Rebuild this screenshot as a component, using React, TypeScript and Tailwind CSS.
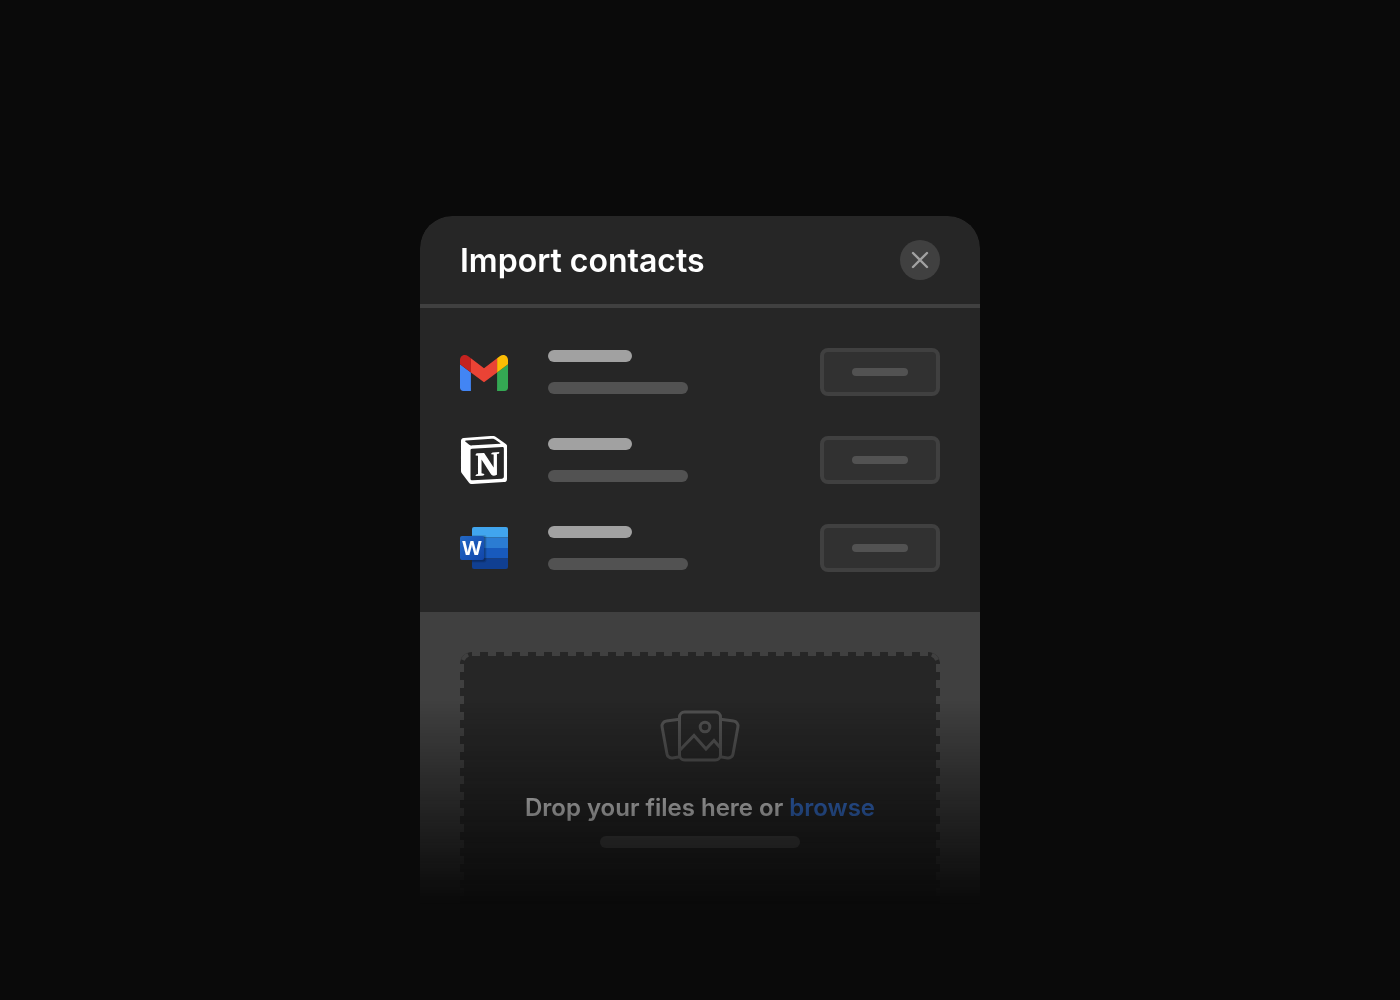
import { SiNotion } from "react-icons/si";

function GmailLogo() {
  return (
    <svg viewBox="52 29 88 88" className="size-12" aria-hidden="true">
      <path fill="#4285f4" d="M58 108h14V74L52 59v43c0 3.32 2.69 6 6 6" />
      <path fill="#34a853" d="M120 108h14c3.32 0 6-2.69 6-6V59l-20 15" />
      <path fill="#fbbc04" d="M120 48v26l20-15v-8c0-7.42-8.47-11.65-14.4-7.2" />
      <path fill="#ea4335" d="M72 74V48l24 18 24-18v26L96 92" />
      <path fill="#c5221f" d="M52 51v8l20 15V48l-5.6-4.2c-5.94-4.45-14.4-.22-14.4 7.2" />
    </svg>
  );
}

function WordLogo() {
  return (
    <svg viewBox="0 0 48 42" className="h-[42px] w-12" aria-hidden="true">
      <defs>
        <clipPath id="word-pages">
          <rect x="12" y="0" width="36" height="42" rx="2" />
        </clipPath>
        <linearGradient id="word-tile" x1="0" y1="0" x2="1" y2="1">
          <stop offset="0" stopColor="#2368c4" />
          <stop offset="1" stopColor="#1146ab" />
        </linearGradient>
      </defs>
      <g clipPath="url(#word-pages)">
        <path fill="#41a5ee" d="M12 0h36v10.5H12z" />
        <path fill="#2b7cd3" d="M12 10.5h36V21H12z" />
        <path fill="#185abd" d="M12 21h36v10.5H12z" />
        <path fill="#103f91" d="M12 31.5h36V42H12z" />
        <path fill="#000" opacity=".12" d="M12 8h12.5a2 2 0 0 1 2 2v23.500a2 2 0 0 1-2 2H12z" />
        <path fill="#000" opacity=".2" d="M12 9h11.500a2 2 0 0 1 2 2v21.500a2 2 0 0 1-2 2H12z" />
      </g>
      <rect x="0" y="9" width="24" height="24" rx="2" fill="url(#word-tile)" />
      <text x="12" y="28" textAnchor="middle" fill="#fff" fontFamily="'Open Sans', sans-serif" fontSize="20" fontWeight="700">
        W
      </text>
    </svg>
  );
}

function PhotosIcon() {
  return (
    <svg
      viewBox="0 0 80 52"
      className="h-[52px] w-20 text-neutral-600"
      fill="none"
      stroke="currentColor"
      strokeWidth="3"
      strokeLinejoin="round"
      aria-hidden="true"
    >
      <rect x="19.500" y="2" width="41" height="48" rx="5" />
      <path d="M19.500 9.200 6.400 11.100a4.800 4.800 0 0 0-4.300 5.800l4.900 27a4.800 4.800 0 0 0 5.600 4L20 46.800" />
      <path d="M60.500 9.200 73.600 11.100a4.800 4.800 0 0 1 4.300 5.800l-4.900 27a4.800 4.800 0 0 1-5.600 4L60 46.800" />
      <circle cx="45" cy="17" r="4.800" />
      <path strokeLinejoin="miter" d="m20 40 14-14.500 12 13.500 8-8.500 6.500 7.500" />
    </svg>
  );
}

function CornerDash({ className }: { className: string }) {
  return (
    <svg viewBox="0 0 12 12" className={className} fill="none" stroke="currentColor" strokeWidth="4" aria-hidden="true">
      <path d="M2 12A10 10 0 0 1 12 2" strokeDasharray="0 4 7.700 4" />
    </svg>
  );
}

function DashedOutline() {
  return (
    <div className="pointer-events-none absolute inset-0 text-neutral-700" aria-hidden="true">
      <div className="absolute inset-x-3 top-0 h-1 bg-[repeating-linear-gradient(to_right,currentColor_0_8px,transparent_8px_16px)]" />
      <div className="absolute top-3 bottom-0 left-0 w-1 bg-[repeating-linear-gradient(to_bottom,currentColor_0_8px,transparent_8px_16px)]" />
      <div className="absolute top-3 right-0 bottom-0 w-1 bg-[repeating-linear-gradient(to_bottom,currentColor_0_8px,transparent_8px_16px)]" />
      <CornerDash className="absolute top-0 left-0 size-3" />
      <CornerDash className="absolute top-0 right-0 size-3 -scale-x-100" />
    </div>
  );
}

const sources = [
  { name: "Gmail", logo: <GmailLogo /> },
  { name: "Notion", logo: <SiNotion className="size-12 text-white" aria-hidden="true" /> },
  { name: "Word", logo: <WordLogo /> },
];

export default function App() {
  return (
    <main className="flex min-h-screen items-start justify-center bg-neutral-950 pt-[216px] font-[Inter,sans-serif]">
      <section
        aria-labelledby="import-title"
        className="w-full max-w-[560px] overflow-hidden rounded-t-[32px] bg-neutral-800 [mask-image:linear-gradient(to_bottom,black_484px,transparent_688px)]"
      >
        <header className="flex items-start justify-between border-b-4 border-neutral-700 px-10 pt-6 pb-[22px]">
          <h1 id="import-title" className="text-[32px] leading-[42px] font-semibold text-white">
            Import contacts
          </h1>
          <button
            type="button"
            aria-label="Close"
            className="flex size-10 items-center justify-center rounded-full bg-neutral-700 text-neutral-400"
          >
            <svg viewBox="0 0 16 16" className="size-4 overflow-visible" fill="none" stroke="currentColor" strokeWidth="2.400" strokeLinecap="round">
              <path d="M1 1l14 14M15 1 1 15" />
            </svg>
          </button>
        </header>

        <ul className="flex flex-col gap-10 p-10">
          {sources.map((source) => (
            <li key={source.name} className="flex h-12 items-center gap-10">
              {source.logo}
              <div className="flex flex-1 flex-col gap-5">
                <div className="h-3 w-[84px] rounded-full bg-neutral-400" />
                <div className="h-3 w-[140px] rounded-full bg-neutral-600" />
              </div>
              <button
                type="button"
                aria-label={`Import from ${source.name}`}
                className="flex h-12 w-[120px] items-center justify-center rounded-lg border-4 border-neutral-700 bg-[#313131]"
              >
                <span className="h-2 w-14 rounded-full bg-neutral-600" />
              </button>
            </li>
          ))}
        </ul>

        <div className="bg-neutral-700 p-10">
          <div className="relative flex flex-col items-center rounded-xl bg-neutral-800 pt-[58px] pb-16">
            <DashedOutline />
            <PhotosIcon />
            <p className="mt-7 text-2xl leading-9 font-semibold text-white">
              Drop your files here or{" "}
              <a href="#browse" className="text-[#3b82f6]">
                browse
              </a>
            </p>
            <div className="mt-2.5 h-3 w-[200px] rounded-full bg-neutral-600" />
          </div>
        </div>
      </section>
    </main>
  );
}
